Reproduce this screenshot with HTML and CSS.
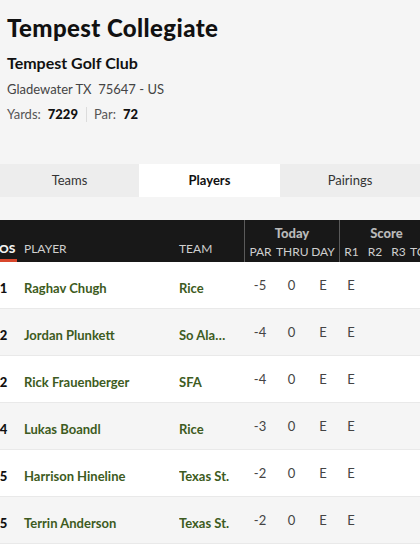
FILE: index.html
```html
<!DOCTYPE html>
<html>
<head>
<meta charset="utf-8">
<link rel="stylesheet" href="styles.css">
</head>
<body>
<header class="event">
  <h1 class="title">Tempest Collegiate</h1>
  <h2 class="course">Tempest Golf Club</h2>
  <p class="address">Gladewater TX&nbsp; 75647 - US</p>
  <p class="stats"><span class="lbl">Yards:</span> <b>7229</b><span class="sep"></span><span class="lbl">Par:</span> <b>72</b></p>
</header>

<nav class="tabs">
  <div class="tab">Teams</div>
  <div class="tab active">Players</div>
  <div class="tab">Pairings</div>
</nav>

<section class="board">
  <div class="grid head">
    <div class="h-pos"><span>POS</span></div>
    <div class="h-player">PLAYER</div>
    <div class="h-team">TEAM</div>
    <div class="group today">Today</div>
    <div class="group score">Score</div>
    <div class="sub first">PAR</div>
    <div class="sub">THRU</div>
    <div class="sub">DAY</div>
    <div class="sub first">R1</div>
    <div class="sub">R2</div>
    <div class="sub">R3</div>
    <div class="sub">TOT</div>
  </div>

  <div class="grid row">
    <div class="pos">1</div><div class="name">Raghav Chugh</div><div class="team"><span>Rice</span></div>
    <div class="val">-5</div><div class="val">0</div><div class="val">E</div><div class="val">E</div><div class="val"></div><div class="val"></div><div class="val"></div>
  </div>
  <div class="grid row alt">
    <div class="pos">2</div><div class="name">Jordan Plunkett</div><div class="team"><span>So Alabama</span></div>
    <div class="val">-4</div><div class="val">0</div><div class="val">E</div><div class="val">E</div><div class="val"></div><div class="val"></div><div class="val"></div>
  </div>
  <div class="grid row">
    <div class="pos">2</div><div class="name">Rick Frauenberger</div><div class="team"><span>SFA</span></div>
    <div class="val">-4</div><div class="val">0</div><div class="val">E</div><div class="val">E</div><div class="val"></div><div class="val"></div><div class="val"></div>
  </div>
  <div class="grid row alt">
    <div class="pos">4</div><div class="name">Lukas Boandl</div><div class="team"><span>Rice</span></div>
    <div class="val">-3</div><div class="val">0</div><div class="val">E</div><div class="val">E</div><div class="val"></div><div class="val"></div><div class="val"></div>
  </div>
  <div class="grid row">
    <div class="pos">5</div><div class="name">Harrison Hineline</div><div class="team"><span>Texas St.</span></div>
    <div class="val">-2</div><div class="val">0</div><div class="val">E</div><div class="val">E</div><div class="val"></div><div class="val"></div><div class="val"></div>
  </div>
  <div class="grid row alt">
    <div class="pos">5</div><div class="name">Terrin Anderson</div><div class="team"><span>Texas St.</span></div>
    <div class="val">-2</div><div class="val">0</div><div class="val">E</div><div class="val">E</div><div class="val"></div><div class="val"></div><div class="val"></div>
  </div>
  <div class="grid row">
    <div class="pos">7</div><div class="name">Cole Anderson</div><div class="team"><span>Rice</span></div>
    <div class="val">-1</div><div class="val">0</div><div class="val">E</div><div class="val">E</div><div class="val"></div><div class="val"></div><div class="val"></div>
  </div>
</section>
</body>
</html>
```

FILE: styles.css
```css
* { box-sizing: border-box; }

html, body {
  margin: 0;
  padding: 0;
  background: #f5f5f5;
  font-family: "Lato", "Open Sans", sans-serif;
  color: #111;
  overflow: hidden;
}

.event {
  padding: 13px 7px 0;
}

.title {
  margin: 0;
  font-size: 24px;
  line-height: 29px;
  font-weight: 900;
  letter-spacing: 0.4px;
  color: #111;
}

.course {
  margin: 11px 0 0;
  font-size: 16px;
  line-height: 20px;
  font-weight: 700;
  color: #111;
}

.address {
  margin: 7px 0 0;
  font-size: 13px;
  line-height: 18px;
  color: #444;
}

.stats {
  margin: 7px 0 0;
  font-size: 13px;
  line-height: 18px;
  color: #444;
  display: flex;
  align-items: center;
}

.stats .lbl { color: #555; }
.stats b {
  margin-left: 7px;
  font-weight: 900;
  color: #111;
}

.stats .sep {
  width: 1px;
  height: 15px;
  background: #dcdcdc;
  margin: 0 7px 0 8px;
}

.tabs {
  margin-top: 41px;
  display: grid;
  grid-template-columns: 139px 141px 140px;
  height: 33px;
  background: #ededed;
}

.tab {
  display: flex;
  align-items: center;
  justify-content: center;
  padding-bottom: 1px;
  font-size: 13px;
  color: #333;
}

.tab.active {
  background: #fff;
  font-weight: 700;
  color: #111;
}

.board {
  margin-top: 23px;
  margin-left: -11px;
  width: 460px;
}

.grid {
  display: grid;
  grid-template-columns: 29px 155px 71px 32px 31px 32px 24px 24px 23px 23px;
}

.head {
  background: #181818;
  grid-template-rows: 21px 21px;
  color: #cfcfcf;
  font-size: 12px;
}

.h-pos, .h-player, .h-team {
  grid-row: 1 / span 2;
  display: flex;
  align-items: flex-end;
  padding-bottom: 6px;
}

.h-pos {
  justify-content: center;
  padding-bottom: 0;
  font-weight: 900;
  color: #f2f2f2;
}

.h-pos span {
  padding: 0 2px 3px;
  border-bottom: 3px solid #d8472c;
}

.h-player, .h-team { padding-left: 6px; }

.group {
  grid-row: 1;
  text-align: center;
  font-weight: 900;
  font-size: 13px;
  color: #b9b9b9;
  border-left: 1px solid #5a5a5a;
  padding-top: 5px;
}

.today { grid-column: 4 / span 3; }
.score { grid-column: 7 / span 4; }

.sub {
  grid-row: 2;
  text-align: center;
  white-space: nowrap;
  padding-top: 3px;
}

.sub.first { border-left: 1px solid #5a5a5a; }

.row {
  height: 47px;
  background: #fff;
  border-bottom: 1px solid #e9e9e9;
  align-items: center;
  font-size: 13px;
}

.row.alt { background: #f5f5f5; }

.pos {
  text-align: center;
  font-weight: 900;
  color: #111;
  padding-top: 5px;
}

.name, .team {
  padding-left: 6px;
  padding-top: 5px;
  font-weight: 700;
  color: #3d5b21;
  white-space: nowrap;
}

.team span {
  display: block;
  max-width: 51px;
  overflow: hidden;
  text-overflow: ellipsis;
}

.val {
  text-align: center;
  color: #444;
}
```
